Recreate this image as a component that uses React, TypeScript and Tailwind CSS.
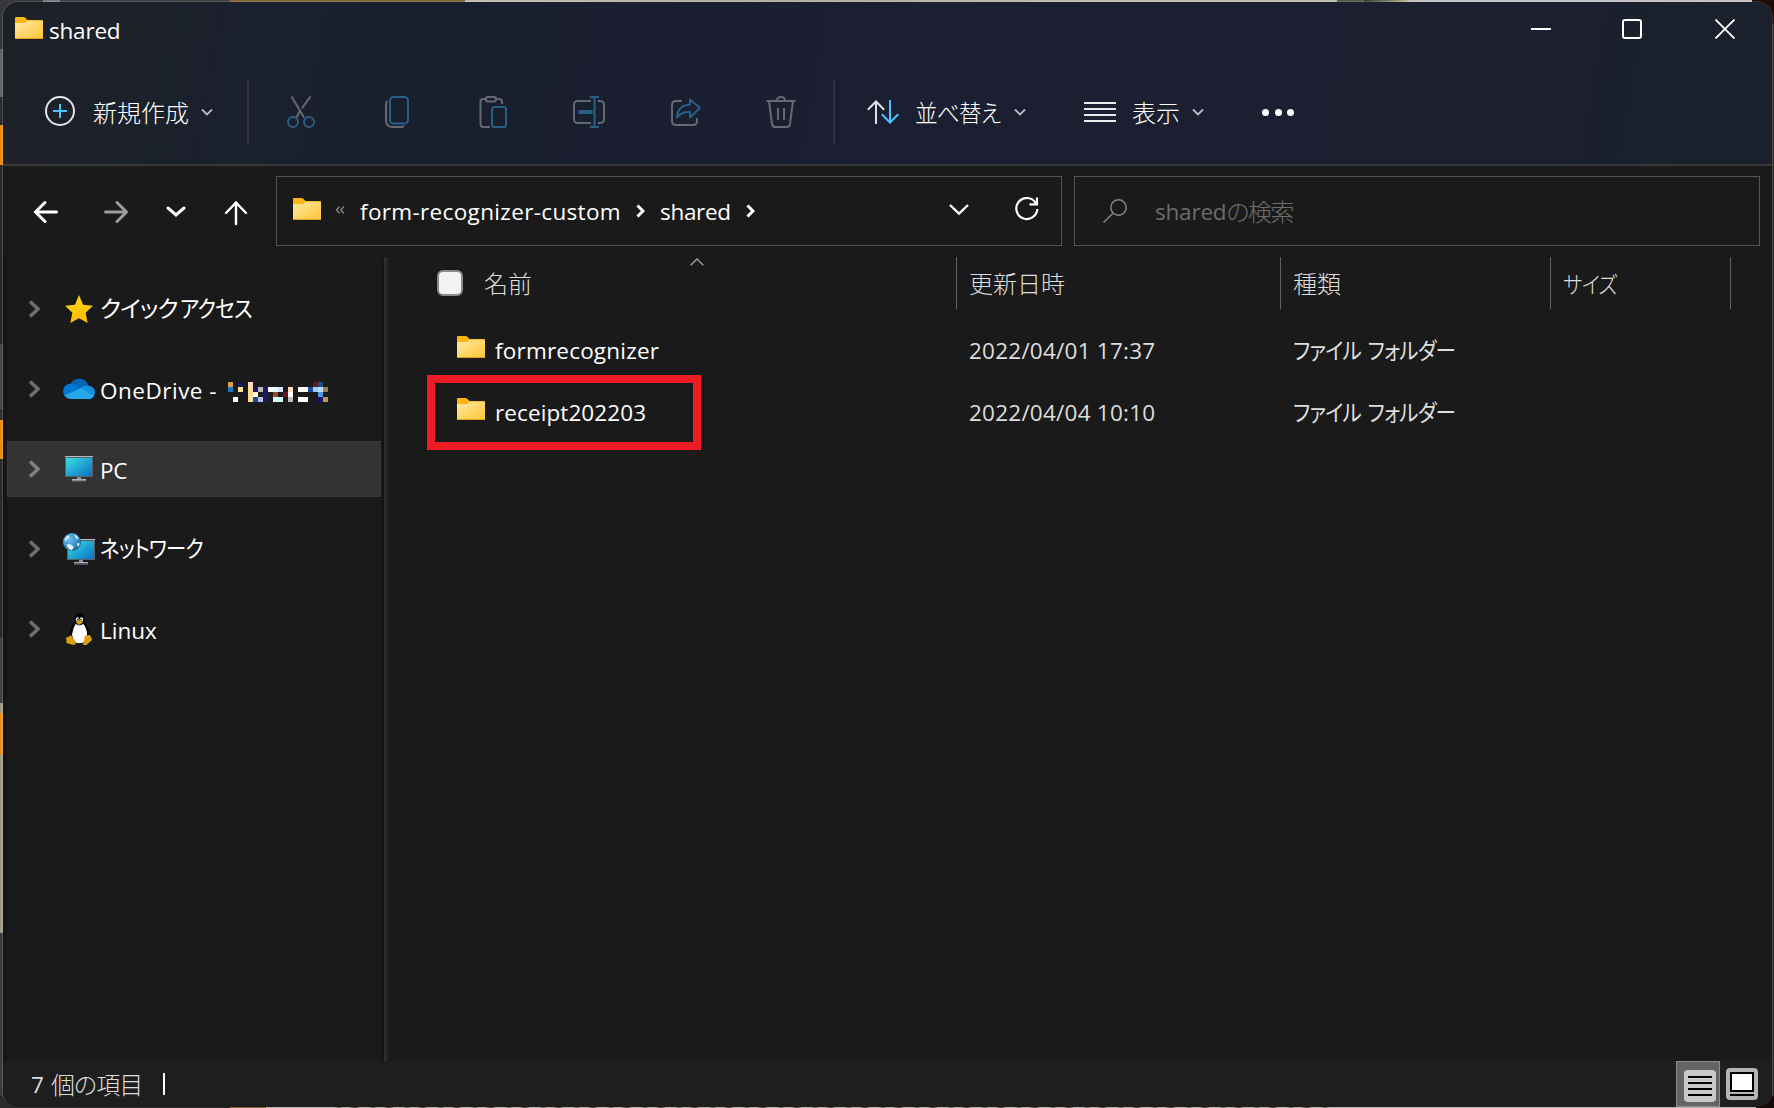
import React from 'react';
import clsx from 'clsx';

const latin = "font-['Open_Sans','Noto_Sans_CJK_JP',sans-serif] text-[22.5px]";
const kanji = "font-['Noto_Sans_CJK_JP',sans-serif] text-[24px] font-light";
const kana = "font-['Noto_Sans_CJK_JP',sans-serif] text-[23px] tracking-[-0.9px] [font-feature-settings:'palt'] inline-block origin-left";

const files = [
    { name: 'formrecognizer', date: '2022/04/01 17:37', type: 'ファイル フォルダー', tracking: 'tracking-[0.2px]' },
    { name: 'receipt202203', date: '2022/04/04 10:10', type: 'ファイル フォルダー', tracking: 'tracking-[0.1px]' }
];

// blurred-out account name, one entry per 5px block: column, row, colour
const blocks: [number, number, string][] = [
    [0, 0, '#e09c4a'], [2, 0, '#1a1a4c'], [4, 0, '#ffdcc0'], [17, 0, '#6e1418'], [18, 0, '#1d4e80'],
    [0, 1, '#1b75c5'], [2, 1, '#ffdb98'], [4, 1, '#ffdb98'], [5, 1, '#1a1670'], [6, 1, '#bbbbbb'],
    [7, 1, '#1a1670'], [8, 1, '#ffffff'], [9, 1, '#d5ffff'], [10, 1, '#ddddff'], [12, 1, '#ffdcc0'],
    [14, 1, '#ffffff'], [15, 1, '#ffffff'], [16, 1, '#1a4a9a'], [17, 1, '#93cdfd'], [18, 1, '#b6dcff'], [19, 1, '#a07850'],
    [4, 2, '#ffdb98'], [5, 2, '#ffffd8'], [7, 2, '#1a1670'], [9, 2, '#9a4d1d'], [11, 2, '#6e1418'], [12, 2, '#ffffff'], [18, 2, '#4a9ae8'],
    [1, 3, '#ffffff'], [4, 3, '#ffdb98'], [5, 3, '#1a4a9a'], [6, 3, '#bbbbdd'], [7, 3, '#1a1670'], [9, 3, '#d5ffff'],
    [10, 3, '#d5ffff'], [12, 3, '#bbbbbb'], [14, 3, '#ffffff'], [15, 3, '#ffffff'], [18, 3, '#1a1670'], [19, 3, '#c09a50']
];

const FolderIcon = () => (
    <svg width="28" height="22" viewBox="0 0 28 22" className="shrink-0">
        <defs>
            <linearGradient id="folder" x1="0" y1="0" x2="1" y2="1">
                <stop offset="0" stopColor="#ffe8a6" />
                <stop offset="1" stopColor="#ffc736" />
            </linearGradient>
        </defs>
        <path d="M0 1q0-1 1-1h7.500q1 0 1.800.8L12.500 3H27q1 0 1 1v17q0 1-1 1H1q-1 0-1-1z" fill="#fbb616" />
        <path d="M0 6h9q1 0 1.600-.6L12.500 3.800H28V21H0z" fill="url(#folder)" />
        <path d="M0 21h28q0 1-1 1H1q-1 0-1-1z" fill="#e2a01d" />
    </svg>
);

type ChevronProps = { w: number; h: number; d: string; color: string; stroke?: number; className?: string };

const Chevron = ({ w, h, d, color, stroke = 2, className }: ChevronProps) => (
    <svg width={w} height={h} viewBox={`0 0 ${w} ${h}`} fill="none" stroke={color} strokeWidth={stroke} className={clsx('shrink-0', className)}>
        <path d={d} />
    </svg>
);

const SmallDown = ({ className }: { className?: string }) => (
    <Chevron w={12} h={8} d="M1 1.500l5 5 5-5" color="#b9bbc2" stroke={1.8} className={className} />
);

const Crumb = ({ className }: { className?: string }) => (
    <Chevron w={9} h={14} d="M1.500 1.500L7 7l-5.500 5.500" color="#ffffff" stroke={3} className={className} />
);

const iconProps = { width: 32, height: 32, viewBox: '0 0 32 32', fill: 'none', strokeWidth: 2, className: 'shrink-0' };
const dim = '#666973';
const dimBlue = '#285f85';

const CutIcon = () => (
    <svg {...iconProps}>
        <path d="M6.500 .5L19 21.500M25.500 .5L16.800 12.500M15 15L11.500 21.500" stroke={dim} />
        <circle cx="8" cy="26" r="5" stroke={dimBlue} />
        <circle cx="24" cy="26" r="5" stroke={dimBlue} />
    </svg>
);

const CopyIcon = () => (
    <svg {...iconProps}>
        <path d="M6.500 5Q5 6 5 8.500V24q0 7 7 7h7.500q2.500 0 3.500-1" stroke={dim} />
        <rect x="9" y="1" width="18" height="26.500" rx="3.500" stroke={dimBlue} />
    </svg>
);

const PasteIcon = () => (
    <svg {...iconProps}>
        <path d="M9 3H6.500Q3.500 3 3.500 6v22q0 3 3 3H13M19 3h3q3 0 3 3v2" stroke={dim} />
        <rect x="9" y="1" width="10" height="4.500" rx="2" stroke={dim} />
        <rect x="15" y="11" width="14" height="20" rx="2.500" stroke={dimBlue} />
    </svg>
);

const RenameIcon = () => (
    <svg {...iconProps}>
        <path d="M18 5H5Q1 5 1 9v14q0 4 4 4h13M25 5h2q4 0 4 4v14q0 4-4 4h-2" stroke={dim} />
        <path d="M21.500 1v30M17 1h9M17 31h9" stroke={dimBlue} />
        <path d="M7 16h11" stroke={dimBlue} strokeWidth="4" strokeLinecap="round" />
    </svg>
);

const ShareIcon = () => (
    <svg {...iconProps}>
        <path d="M13 5H7Q3 5 3 9v16q0 4 4 4h17q4 0 4-4v-3" stroke={dim} />
        <path d="M21 3.500L31 12 21 21.500V16Q12.500 15.500 8 21.500 8.500 9.500 21 8.500z" stroke={dimBlue} strokeLinejoin="round" />
    </svg>
);

const TrashIcon = () => (
    <svg {...iconProps}>
        <path d="M1.500 5h29M12 5q0-4 4-4t4 4M4 5l3 23q.4 3 3.500 3h11q3 0 3.500-3L28 5M13 12v12M19 12v12" stroke={dim} />
    </svg>
);

const SortIcon = () => (
    <svg width="32" height="24" viewBox="0 0 32 24" fill="none" strokeWidth="2" className="shrink-0">
        <path d="M9 24V1.500M.8 9.800L9 1.500l8.200 8.300" stroke="#dfe0e3" />
        <path d="M23 0v22.500M14.800 14.200L23 22.500l8.200-8.300" stroke="#4cc2ff" />
    </svg>
);

const StarIcon = () => (
    <svg width="32" height="32" viewBox="0 0 32 32">
        <defs>
            <linearGradient id="star" x1="0" y1="0" x2="0" y2="1">
                <stop offset="0" stopColor="#ffda0b" />
                <stop offset="1" stopColor="#ffb70a" />
            </linearGradient>
        </defs>
        <path d="M16 2l4 9.800 10 1-7.400 7 2.100 10.200L16 25.300 7.300 30l2.100-10.200L2 12.800l10-1z" fill="url(#star)" />
    </svg>
);

const CloudIcon = () => (
    <svg width="32" height="32" viewBox="0 0 32 32">
        <path d="M7 13Q9 5.500 16.500 5.500 23 6 25.500 12.500L20 20z" fill="#0364b8" />
        <path d="M8 25.500Q0 25 0 18q.5-6.500 7-7.300 4-.3 6.500 1.600L23 18 8 25.500z" fill="#0078d4" />
        <path d="M17 15.800Q20 12.200 24.500 12.500 32 13.500 32 19.500 31.500 25 26 26z" fill="#1490df" />
        <path d="M1.500 22.500L18.500 15l12.300 8Q29 26 25.500 26H8.500Q4 26 1.500 22.500z" fill="#28a8ea" />
    </svg>
);

const PcIcon = () => (
    <svg width="32" height="32" viewBox="0 0 32 32">
        <defs>
            <linearGradient id="screen" x1="0" y1="0" x2="1" y2="1">
                <stop offset="0" stopColor="#37dfe3" />
                <stop offset="1" stopColor="#0c6fc4" />
            </linearGradient>
        </defs>
        <path d="M2 3h28v21H2z" fill="#5b5f66" />
        <path d="M2 3h28v1H2z" fill="#b4bac2" />
        <path d="M3 5h26v18H3z" fill="url(#screen)" />
        <path d="M14 24h4v2h-4z" fill="#8b929c" />
        <path d="M9 26h14v2H9z" fill="#aab4c0" />
        <path d="M9 27.500h14v1.500H9z" fill="#4a525c" />
    </svg>
);

const NetworkIcon = () => (
    <svg width="32" height="32" viewBox="0 0 32 32">
        <defs>
            <radialGradient id="globe" cx=".35" cy=".35" r=".7">
                <stop offset="0" stopColor="#6cc0e8" />
                <stop offset=".6" stopColor="#3a94cb" />
                <stop offset="1" stopColor="#1f5f8b" />
            </radialGradient>
        </defs>
        <path d="M4 6h28v21H4z" fill="#5b5f66" />
        <path d="M4 6h28v1H4z" fill="#b4bac2" />
        <path d="M5 8h26v18H5z" fill="url(#screen)" />
        <path d="M16 27h4v2h-4z" fill="#8b929c" />
        <path d="M11 29h14v1.500H11z" fill="#aab4c0" />
        <path d="M11 30.500h14V32H11z" fill="#4a525c" />
        <circle cx="9" cy="9" r="9" fill="url(#globe)" />
        <path d="M1.500 7l2-3.500 2-1 1 1-1 2-2 1-.5 2zM11 1.500l2.500 1 2 3-1.500 1-1.500-2zM3.500 11.500l3.500-.5 4 3-2.500 3.500-3.500-2.500zM14.500 10l2.500.5-1.500 3-1.500-1z" fill="#d9eef5" />
    </svg>
);

const TuxIcon = () => (
    <svg width="32" height="32" viewBox="0 0 32 32">
        <path d="M11.500 7Q11 0 16.500 0t5 7q0 3 2.500 6.500 4 5.500 3 10L22 30H11l-4-5Q4.500 20 9 13q2.500-3 2.500-6z" fill="#050505" />
        <path d="M12.500 11l4 1.500 4-1.500q3.500 5 3.500 10.500 0 7-5 8.500h-5q-3-.5-5-8 .5-6 3.500-11z" fill="#fff" />
        <ellipse cx="14.300" cy="6.200" rx="1.500" ry="1.900" fill="#e8e8e8" />
        <ellipse cx="18.500" cy="6.200" rx="1.700" ry="1.900" fill="#e8e8e8" />
        <circle cx="14.700" cy="6.500" r=".7" fill="#000" />
        <circle cx="18" cy="6.500" r=".7" fill="#000" />
        <path d="M12.500 9l3.800-2 4 2-4 3z" fill="#d8a010" />
        <path d="M7.500 22l4 5 1.500 4-3 1-6.500-2-.4-5.500 2.500-.5zM22 22.500l5-.5 1.500 3 .5 2-5.500 5h-3.500z" fill="#d9a013" />
    </svg>
);

const sidebar = [
    {
        icon: <StarIcon />,
        label: (
            <div className="pb-1.5">
                <span className={clsx(kana, 'w-[76px] scale-x-[1.02]')}>クイック</span> <span className={clsx(kana, 'scale-x-[0.9]')}>アクセス</span>
            </div>
        )
    },
    { icon: <CloudIcon />, label: <span className={clsx(latin, 'tracking-[0.5px]')}>OneDrive -</span>, masked: true },
    { icon: <PcIcon />, label: <span className={clsx(latin, 'tracking-[-0.3px]')}>PC</span>, active: true },
    {
        icon: <NetworkIcon />,
        label: (
            <div className="pb-1.5">
                <span className={clsx(kana, 'scale-x-[0.885]')}>ネットワーク</span>
            </div>
        )
    },
    { icon: <TuxIcon />, label: <span className={latin}>Linux</span> }
];

const Backdrop = () => (
    <div className="col-start-1 row-start-1 flex flex-col bg-[#302b2b]">
        <div className="flex h-6 shrink-0">
            <div className="w-[43px] bg-[#35373a]" />
            <div className="w-[17px] bg-[#77797c]" />
            <div className="w-[170px] bg-[#3c3d40]" />
            <div className="w-[235px] bg-[#7f6233]" />
            <div className="w-[635px] bg-linear-to-r from-[#c3bcb2] via-[#aca99e] to-[#bdbcab]" />
            <div className="w-[237px] bg-[#bdbcab]" />
            <div className="w-[27px] bg-[#575844]" />
            <div className="w-[45px] bg-linear-to-r from-[#30332f] to-[#c1bf85]" />
            <div className="w-[343px] bg-[#bfbdc2]" />
            <div className="flex-1 bg-[#1d0b08]" />
        </div>
        <div className="flex w-6 flex-1 flex-col">
            <div className="h-[25px] bg-[#35373a]" />
            <div className="h-[48px] bg-[#626466]" />
            <div className="h-[28px] bg-[#2c2c2e]" />
            <div className="h-[40px] bg-[#ed8b0c]" />
            <div className="h-[179px] bg-[#292a2c]" />
            <div className="h-[65px] bg-[#45484b]" />
            <div className="h-[11px] bg-[#2f3134]" />
            <div className="h-[39px] bg-[#ed8b0c]" />
            <div className="h-[178px] bg-[#292b2e]" />
            <div className="h-[66px] bg-[#3c4247]" />
            <div className="h-[10px] bg-[#a39b89]" />
            <div className="h-[42px] bg-[#e8921f]" />
            <div className="h-[178px] bg-[#a39b89]" />
            <div className="flex-1 bg-[#373c42]" />
        </div>
        <div className="flex h-3 shrink-0">
            <div className="w-[230px] bg-[#2a2a2c]" />
            <div className="w-[36px] bg-[#80602c]" />
            <div className="w-[60px] bg-[#b9b2ac]" />
            <div className="w-[1010px] bg-[repeating-linear-gradient(90deg,#b9b2ac_0_9px,#5e5a59_13px,#b9b2ac_17px_23px,#383636_29px,#b9b2ac_34px)]" />
            <div className="w-[420px] bg-[#b9b2ac]" />
            <div className="flex-1 bg-[#160a08]" />
        </div>
    </div>
);

const TitleBar = () => (
    <div className="flex h-[62px] shrink-0 items-start">
        <div className="flex pt-[15px] pl-3">
            <FolderIcon />
        </div>
        <span className={clsx(latin, 'ml-1.5 pt-[15px] leading-7 tracking-[-0.2px] text-white')}>shared</span>
        <svg width="204" height="20" viewBox="0 0 204 20" fill="none" stroke="#ffffff" className="mt-[17px] mr-[37px] ml-auto">
            <path d="M0 10h20" strokeWidth="2" />
            <rect x="92" y="1" width="18" height="18" rx="2" strokeWidth="2" />
            <path d="M184.500 .5l19 19M203.500 .5l-19 19" strokeWidth="1.800" />
        </svg>
    </div>
);

const Toolbar = () => (
    <div className="flex h-[100px] shrink-0 items-center pb-[5px] pl-[42px] text-white">
        <svg width="30" height="30" viewBox="0 0 30 30" fill="none" strokeWidth="2" className="mb-0.5 shrink-0">
            <circle cx="15" cy="15" r="14" stroke="#e4e5e7" />
            <path d="M15 8v14M8 15h14" stroke="#4cc2ff" />
        </svg>
        <span className={clsx(kanji, 'ml-[18px] w-24 whitespace-nowrap')}>新規作成</span>
        <SmallDown className="ml-3" />
        <div className="ml-[34px] h-16 w-0.5 bg-[#30333f]" />
        <div className="ml-9 flex gap-16">
            <CutIcon />
            <CopyIcon />
            <PasteIcon />
            <RenameIcon />
            <ShareIcon />
            <TrashIcon />
        </div>
        <div className="ml-9 h-16 w-0.5 bg-[#2e3242]" />
        <div className="ml-8">
            <SortIcon />
        </div>
        <span className={clsx(kanji, "ml-4 w-[87px] origin-left scale-x-[0.94] whitespace-nowrap tracking-[-0.8px] [font-feature-settings:'palt']")}>並べ替え</span>
        <SmallDown className="ml-3" />
        <svg width="32" height="20" viewBox="0 0 32 20" stroke="#e9eaec" strokeWidth="2" className="ml-[58px]">
            <path d="M0 1h32M0 7h32M0 13h32M0 19h32" />
        </svg>
        <span className={clsx(kanji, 'ml-4 w-12 whitespace-nowrap')}>表示</span>
        <SmallDown className="ml-3" />
        <div className="mt-px ml-[58px] flex gap-[5.7px]">
            <div className="size-[7px] rounded-full bg-white" />
            <div className="size-[7px] rounded-full bg-white" />
            <div className="size-[7px] rounded-full bg-white" />
        </div>
    </div>
);

const AddressRow = () => (
    <div className="flex h-[91px] shrink-0 pt-[10px] text-white">
        <svg width="273" height="70" viewBox="0 0 273 70" fill="none" strokeWidth="3" className="shrink-0" stroke="#ffffff">
            <path d="M53.500 36h-21M42 26.500L32.500 36l9.500 9.500" strokeLinecap="round" />
            <path d="M102.500 36h21M114 26.500l9.500 9.500-9.500 9.500" stroke="#9b9b9b" strokeLinecap="round" />
            <path d="M165 32l8 7 8-7" strokeLinecap="round" />
            <path d="M233 48V27M223 37l10-10.500L243 37" strokeWidth="2.400" strokeLinecap="round" />
        </svg>
        <div className="flex h-[70px] w-[786px] items-center border border-[#535353] pl-4">
            <div className="pb-1">
                <FolderIcon />
            </div>
            <svg width="10" height="8" viewBox="0 0 10 8" fill="none" stroke="#9a9a9a" strokeWidth="1.200" className="mb-0.5 ml-[14px]">
                <path d="M4.500 .7L1.500 4l3 3.300M8.800 .7L5.800 4l3 3.300" />
            </svg>
            <span className={clsx(latin, 'ml-[15px] w-[261px] pt-0.5 whitespace-nowrap tracking-[0.34px]')}>form-recognizer-custom</span>
            <Crumb className="ml-[15px]" />
            <span className={clsx(latin, 'ml-[15px] w-[71px] pt-0.5 whitespace-nowrap tracking-[-0.3px]')}>shared</span>
            <Crumb className="ml-[15px]" />
            <Chevron w={20} h={13} d="M1 2l9 8.500L19 2" color="#ffffff" stroke={2.4} className="mr-[46px] mb-1 ml-auto" />
            <svg width="24" height="24" viewBox="0 0 24 24" fill="none" stroke="#ffffff" strokeWidth="2.200" className="mr-[22px] mb-1">
                <path d="M22.300 12A10.500 10.500 0 1 1 19.800 4.700l1.600 1.800M22 .5v6.800h-7.500" />
            </svg>
        </div>
        <div className="ml-3 flex h-[70px] w-[686px] items-center border border-[#535353] pl-7 text-[#6d6d6d]">
            <svg width="24" height="24" viewBox="0 0 24 24" fill="none" stroke="#858585" strokeWidth="1.500">
                <circle cx="15.500" cy="8.500" r="7.700" />
                <path d="M10 14.200L.5 23.500" />
            </svg>
            <span className={clsx(latin, 'ml-7 pt-0.5 tracking-[-0.2px]')}>shared</span>
            <span className={clsx(kanji, "tracking-[-1.5px] [font-feature-settings:'palt']")}>の検索</span>
        </div>
    </div>
);

const Sidebar = () => (
    <div className="flex w-[386px] shrink-0 border-l-4 border-[#151515]">
        <div className="flex w-[374px] flex-col gap-6 pt-6">
            {sidebar.map((item, i) => (
                <div
                    key={i}
                    className={clsx('flex h-14 items-center border pl-5 text-white', item.active ? 'border-[#3a3a3a] bg-[#333333]' : 'border-transparent')}
                >
                    <Chevron w={13} h={18} d="M2 1.500L10 9l-8 7.500" color={item.active ? '#808080' : '#6e6e6e'} stroke={3.6} />
                    <div className="ml-[22px]">{item.icon}</div>
                    <div className="ml-[5px] pt-1.5 leading-8 whitespace-nowrap">{item.label}</div>
                    {item.masked && (
                        <svg width="100" height="20" viewBox="0 0 20 4" shapeRendering="crispEdges" className="mt-[5px] ml-[11px]">
                            {blocks.map(([x, y, fill]) => (
                                <rect key={`${x}-${y}`} x={x} y={y} width="1" height="1" fill={fill} />
                            ))}
                        </svg>
                    )}
                </div>
            ))}
        </div>
        <div className="w-[3px] bg-[#151515]" />
        <div className="w-[2px] bg-[#2f2f2f]" />
        <div className="w-[3px] bg-[#212121]" />
    </div>
);

const FileList = () => (
    <div className="flex-1 text-[#dedede]">
        <div className={clsx(kanji, 'flex h-[52px] whitespace-nowrap')}>
            <div className="relative flex w-[568px] items-center border-r border-[#636363] pl-12">
                <div className="size-[26px] rounded-[6px] border-2 border-[#8a8a8a] bg-[#f3f3f3]" />
                <span className="ml-[21px]">名前</span>
                <Chevron w={14} h={8} d="M.7 7.300L7 1l6.300 6.300" color="#a5a5a5" stroke={1.3} className="absolute top-px left-[301px]" />
            </div>
            <div className="flex w-[324px] items-center border-r border-[#636363] pl-3">更新日時</div>
            <div className="flex w-[270px] items-center border-r border-[#636363] pl-3">種類</div>
            <div className="flex w-[180px] items-center border-r border-[#636363] pl-3">
                <span className={clsx(kana, 'scale-x-[0.9]')}>サイズ</span>
            </div>
        </div>
        <div className="pt-[11px]">
            {files.map((file) => (
                <div key={file.name} className="relative flex h-[62px] items-center whitespace-nowrap">
                    {file.name === 'receipt202203' && (
                        <div className="absolute -top-[7px] left-[38px] h-[75px] w-[274px] border-8 border-[#ed1c24]" />
                    )}
                    <div className="flex w-[580px] items-center pl-[68px]">
                        <div className="pb-[9px]">
                            <FolderIcon />
                        </div>
                        <span className={clsx(latin, file.tracking, 'ml-[10px] text-white')}>{file.name}</span>
                    </div>
                    <span className={clsx(latin, 'w-[324px] tracking-[0.23px]')}>{file.date}</span>
                    <span className={clsx(kana, 'scale-x-[0.895] pb-1 [word-spacing:3px]')}>{file.type}</span>
                </div>
            ))}
        </div>
    </div>
);

const StatusBar = () => (
    <div className="flex h-[46px] shrink-0 items-center bg-[#1e1e1e] pl-7 text-[#dedede]">
        <span className={clsx(latin, 'pt-0.5')}>7</span>
        <span className={clsx(kanji, "ml-[7px] w-[90px] whitespace-nowrap tracking-[-0.9px] [font-feature-settings:'palt']")}>個の項目</span>
        <div className="ml-[22px] h-[22px] w-0.5 bg-white" />
        <div className="ml-auto flex h-[46px] w-11 items-end justify-end border border-[#8c8c8c] bg-[#656565] pr-[3px] pb-1">
            <svg width="32" height="32" viewBox="0 0 32 32">
                <rect width="32" height="32" rx="4" fill="#c9c9c9" />
                <path d="M4 7h24M4 13h24M4 19h24M4 25h24" stroke="#000000" strokeWidth="2" />
            </svg>
        </div>
        <svg width="32" height="32" viewBox="0 0 32 32" className="mr-[14px] ml-1.5">
            <rect width="32" height="32" rx="4" fill="#b4b4b4" />
            <rect x="5" y="5" width="22" height="18" fill="#ffffff" stroke="#000000" strokeWidth="2" />
            <path d="M4 27h24" stroke="#000000" strokeWidth="2" />
        </svg>
    </div>
);

export default function App() {
    return (
        <div className="grid h-[1108px] w-[1774px] grid-cols-1 grid-rows-1 overflow-hidden">
            <Backdrop />
            <div className="col-start-1 row-start-1 mt-px mr-px mb-px ml-0.5 flex flex-col overflow-hidden rounded-[16px] border border-b-0 border-white/15 bg-[#1a1a1a] bg-clip-padding">
                <div className="flex h-[164px] shrink-0 flex-col border-b-2 border-[#393939] bg-[linear-gradient(100deg,#1e2027_0%,#1b212b_10%,#1a1f30_24%,#1b1f31_50%,#1b1f30_88%,#1a212c_96%)]">
                    <TitleBar />
                    <Toolbar />
                </div>
                <AddressRow />
                <div className="flex min-h-0 flex-1">
                    <Sidebar />
                    <FileList />
                </div>
                <StatusBar />
            </div>
        </div>
    );
}
